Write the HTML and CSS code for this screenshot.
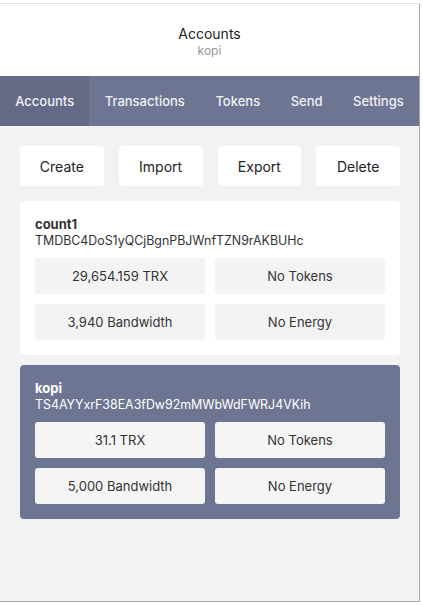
FILE: index.html
```html
<!DOCTYPE html>
<html lang="en">
<head>
    <meta charset="UTF-8">
    <meta name="viewport" content="width=device-width, initial-scale=1.0">
    <title>Accounts</title>
    <link rel="stylesheet" href="styles.css">
</head>
<body>
    <div class="popup">
        <div class="header">
            <div class="title">Accounts</div>
            <div class="subtitle">kopi</div>
        </div>
        <div class="tabs">
            <div class="tab active">Accounts</div>
            <div class="tab">Transactions</div>
            <div class="tab">Tokens</div>
            <div class="tab">Send</div>
            <div class="tab">Settings</div>
        </div>
        <div class="content">
            <div class="actions">
                <button class="action">Create</button>
                <button class="action">Import</button>
                <button class="action">Export</button>
                <button class="action">Delete</button>
            </div>

            <div class="account">
                <div class="name">count1</div>
                <div class="address">TMDBC4DoS1yQCjBgnPBJWnfTZN9rAKBUHc</div>
                <div class="stats">
                    <div class="stat">29,654.159 TRX</div>
                    <div class="stat">No Tokens</div>
                    <div class="stat">3,940 Bandwidth</div>
                    <div class="stat">No Energy</div>
                </div>
            </div>

            <div class="account selected">
                <div class="name">kopi</div>
                <div class="address">TS4AYYxrF38EA3fDw92mMWbWdFWRJ4VKih</div>
                <div class="stats">
                    <div class="stat">31.1 TRX</div>
                    <div class="stat">No Tokens</div>
                    <div class="stat">5,000 Bandwidth</div>
                    <div class="stat">No Energy</div>
                </div>
            </div>
        </div>
    </div>
</body>
</html>
```

FILE: styles.css
```css
/* Global */
* {
    box-sizing: border-box;
    margin: 0;
    padding: 0;
    font-family: "Inter", "Noto Sans", sans-serif;
}
body {
    background: #ffffff;
    color: #333;
}

/* Popup frame */
.popup {
    width: 420px;
    height: 599px;
    margin-top: 3px;
    border-top: 1px solid #e2e2e2;
    border-right: 1px solid #a8a8a8;
    border-bottom: 1px solid #a8a8a8;
    background: #f2f2f2;
    display: flex;
    flex-direction: column;
}

/* Header */
.header {
    background: #ffffff;
    height: 72px;
    display: flex;
    flex-direction: column;
    align-items: center;
    justify-content: center;
    padding-top: 4px;
}
.title {
    font-size: 14px;
    color: #222;
    line-height: 18px;
}
.subtitle {
    font-size: 12px;
    color: #999;
    line-height: 16px;
}

/* Tabs */
.tabs {
    display: flex;
    height: 50px;
    background: #6e7593;
}
.tab {
    flex-grow: 1;
    display: flex;
    align-items: center;
    justify-content: center;
    padding: 0 15px;
    color: #f0f0f4;
    font-size: 13px;
    font-weight: 500;
}
.tab.active {
    background: #646a86;
}

/* Content */
.content {
    padding: 20px 19px 20px 20px;
    display: flex;
    flex-direction: column;
    gap: 10px;
}
.actions {
    display: flex;
    gap: 15px;
    margin-bottom: 5px;
}
.action {
    flex: 1;
    height: 40px;
    border: none;
    background: #fff;
    border-radius: 4px;
    font-size: 14px;
    color: #222;
    cursor: pointer;
}

/* Account cards */
.account {
    background: #fff;
    border-radius: 4px;
    padding: 15px;
}
.name {
    font-size: 13px;
    font-weight: bold;
    line-height: 16px;
}
.address {
    font-size: 12.4px;
    line-height: 17px;
    margin-bottom: 9px;
}
.stats {
    display: grid;
    grid-template-columns: 1fr 1fr;
    gap: 10px;
}
.stat {
    height: 36px;
    display: flex;
    align-items: center;
    justify-content: center;
    background: #f3f3f3;
    border-radius: 3px;
    font-size: 13px;
}
.account.selected {
    background: #6e7593;
    color: #fff;
}
.account.selected .stat {
    background: #f5f5f5;
    color: #333;
}
```
